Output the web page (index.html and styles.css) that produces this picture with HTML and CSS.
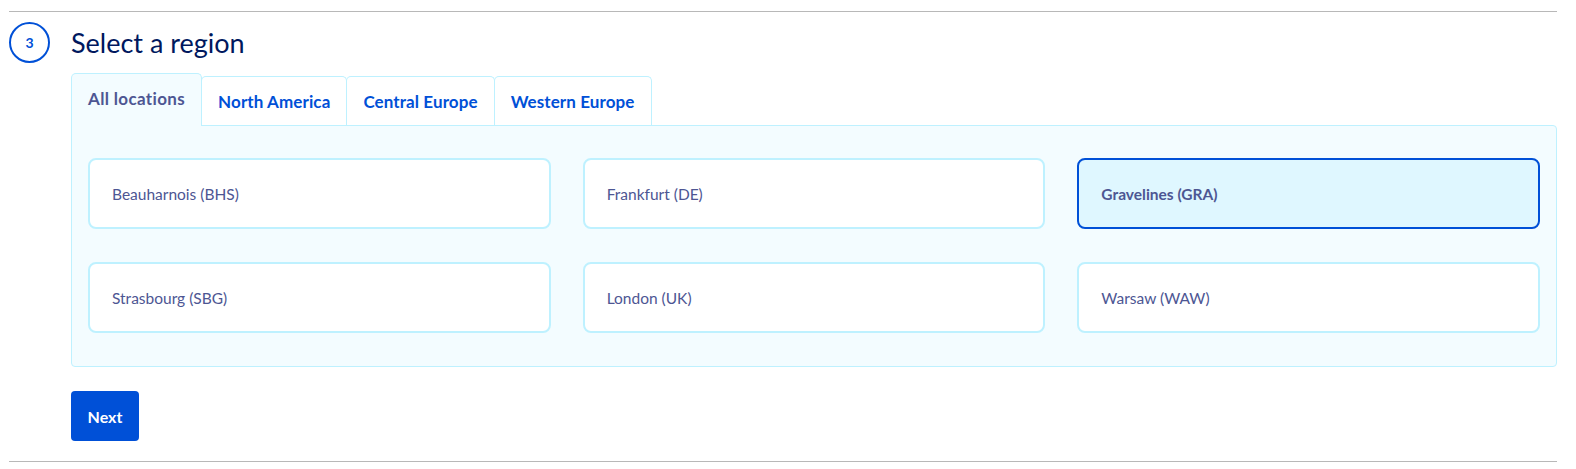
FILE: index.html
```html
<!DOCTYPE html>
<html lang="en">
<head>
<meta charset="utf-8">
<title>Select a region</title>
<link rel="stylesheet" href="styles.css">
</head>
<body>
<section class="step">
  <div class="step-header">
    <span class="step-number">3</span>
    <h2 class="step-title">Select a region</h2>
  </div>
  <div class="step-body">
    <div class="tabs">
      <div class="tab tab-active">All locations</div>
      <div class="tab">North America</div>
      <div class="tab">Central Europe</div>
      <div class="tab">Western Europe</div>
    </div>
    <div class="panel">
      <div class="card">Beauharnois (BHS)</div>
      <div class="card">Frankfurt (DE)</div>
      <div class="card card-selected">Gravelines (GRA)</div>
      <div class="card">Strasbourg (SBG)</div>
      <div class="card">London (UK)</div>
      <div class="card">Warsaw (WAW)</div>
    </div>
    <button class="btn-next" type="button">Next</button>
  </div>
</section>
</body>
</html>
```

FILE: styles.css
```css
html, body {
  margin: 0;
  padding: 0;
  background: #ffffff;
}

body {
  font-family: Lato, "Source Sans Pro", "Open Sans", sans-serif;
  color: #4d5693;
}

.step {
  width: 1548px;
  margin: 11px 0 0 9px;
  border-top: 1px solid #b8b8b8;
  border-bottom: 1px solid #b8b8b8;
  padding: 10px 0 20px 0;
}

.step-header {
  display: flex;
  align-items: center;
  gap: 21px;
  height: 41px;
}

.step-number {
  box-sizing: border-box;
  width: 41px;
  height: 41px;
  border: 2px solid #0050d7;
  border-radius: 50%;
  display: flex;
  align-items: center;
  justify-content: center;
  color: #0050d7;
  font-weight: 700;
  font-size: 14px;
}

.step-title {
  margin: 0;
  font-size: 27px;
  font-weight: 400;
  color: #00185e;
  line-height: 1;
}

.step-body {
  margin-left: 62px;
  margin-top: 10px;
}

.tabs {
  display: flex;
  align-items: flex-end;
}

.tab {
  box-sizing: border-box;
  height: 49px;
  padding: 0 16px;
  display: flex;
  align-items: center;
  border: 1px solid #bef1ff;
  border-bottom: 0;
  border-radius: 5px 5px 0 0;
  background: #ffffff;
  color: #0050d7;
  font-weight: 700;
  font-size: 17px;
  letter-spacing: 0.1px;
  margin-left: -1px;
}

.tab:first-child {
  margin-left: 0;
}

.tab-active {
  position: relative;
  z-index: 1;
  height: 53px;
  margin-bottom: -1px;
  padding-bottom: 3px;
  background: #f3fcff;
  color: #4d5693;
  letter-spacing: 0.35px;
}

.panel {
  box-sizing: border-box;
  border: 1px solid #bef1ff;
  border-radius: 0 4px 4px 4px;
  background: #f3fcff;
  padding: 32px 16px 33px 16px;
  display: grid;
  grid-template-columns: repeat(3, 1fr);
  gap: 33px 32px;
}

.card {
  box-sizing: border-box;
  height: 71px;
  border: 2px solid #bef1ff;
  border-radius: 8px;
  background: #ffffff;
  padding: 0 22px;
  display: flex;
  align-items: center;
  font-size: 15.5px;
  color: #4d5693;
}

.card-selected {
  border-color: #0050d7;
  background: #dff7ff;
  font-weight: 700;
}

.btn-next {
  margin-top: 24px;
  width: 68px;
  height: 50px;
  border: 0;
  border-radius: 4px;
  background: #0050d7;
  color: #ffffff;
  font-family: inherit;
  font-weight: 700;
  font-size: 16px;
  padding: 0;
  display: block;
}
```
